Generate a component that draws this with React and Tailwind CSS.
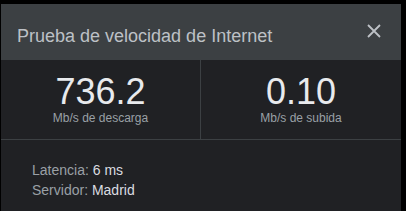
export default function App() {
  return (
    <div className="w-[406px] h-[211px] bg-black pt-[4px] pl-[1px] overflow-hidden" style={{ fontFamily: '"Liberation Sans", Arial, sans-serif' }}>
      <div className="w-[400px] h-[207px] bg-[#202124] flex flex-col">
        <div className="h-[56px] bg-[#3c4043] flex items-start justify-between pl-[16px] pr-[20px] shrink-0">
          <div className="pt-[22px] text-[18px] leading-[20px] text-[#bdc1c6]">Prueba de velocidad de Internet</div>
          <svg className="mt-[20px]" width="14" height="14" viewBox="0 0 14 14">
            <path d="M1 1L13 13M13 1L1 13" stroke="#bdc1c6" strokeWidth="1.8" />
          </svg>
        </div>
        <div className="flex h-[80px] border-b border-[#3c4043] shrink-0">
          <div className="w-[200px] border-r border-[#3c4043] flex flex-col items-center pt-[14px]">
            <div className="text-[36px] leading-[36px] text-[#e8eaed]">736.2</div>
            <div className="mt-[1px] text-[12px] leading-[14px] text-[#9aa0a6]">Mb/s de descarga</div>
          </div>
          <div className="flex-1 flex flex-col items-center pt-[14px]">
            <div className="text-[36px] leading-[36px] text-[#e8eaed]">0.10</div>
            <div className="mt-[1px] text-[12px] leading-[14px] text-[#9aa0a6]">Mb/s de subida</div>
          </div>
        </div>
        <div className="pt-[20px] pl-[31px] text-[14px] leading-[20px]">
          <div><span className="text-[#9aa0a6]">Latencia: </span><span className="text-[#dadce0]">6 ms</span></div>
          <div><span className="text-[#9aa0a6]">Servidor: </span><span className="text-[#dadce0]">Madrid</span></div>
        </div>
      </div>
    </div>
  );
}
